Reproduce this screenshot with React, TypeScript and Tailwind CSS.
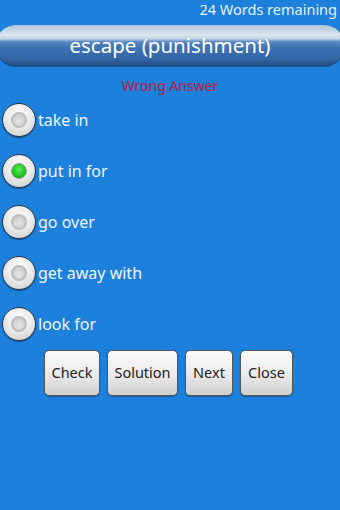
const options = ["take in", "put in for", "go over", "get away with", "look for"];
const buttons = [
  { label: "Check", w: "w-[56px]" },
  { label: "Solution", w: "w-[71px]" },
  { label: "Next", w: "w-[48px]" },
  { label: "Close", w: "w-[53px]" },
];

const Radio = ({ checked }: { checked: boolean }) => (
  <div className="w-[34px] h-[34px] rounded-full border border-[#2a3a4a] bg-[radial-gradient(circle_at_50%_35%,#ffffff_0%,#ececec_45%,#c9c9c9_100%)] flex items-center justify-center shadow-[0_1px_1px_rgba(0,0,0,0.4)]">
    {checked ? (
      <div className="w-[16px] h-[16px] rounded-full bg-[radial-gradient(circle_at_50%_40%,#5cf05c_0%,#1cc41c_60%,#0f8f0f_100%)] border border-[#9a9a9a]" />
    ) : (
      <div className="w-[16px] h-[16px] rounded-full border-2 border-[#bdbdbd] bg-[radial-gradient(circle_at_50%_60%,#e6e6e6_0%,#c4c4c4_100%)]" />
    )}
  </div>
);

export default function App() {
  return (
    <div className="w-[340px] h-[510px] bg-[#1c80dc] font-['Noto_Sans',sans-serif] overflow-hidden flex flex-col">
      <div className="text-right text-[14.5px] leading-[18px] text-[#e6f0fa] pr-[3px]">24 Words remaining</div>

      {/* title bar */}
      <div className="mt-[7px] h-[42px] -mx-[4px] rounded-[20px] border-b-2 border-[#1b4e86] bg-[linear-gradient(to_bottom,#aec3d8_0%,#dbe5ee_25%,#c4d4e4_34%,#5b89c2_42%,#3f73b3_55%,#3466a6_85%,#264f86_100%)] flex items-center justify-center">
        <span className="text-white text-[20.5px] leading-none pt-[1px]">escape (punishment)</span>
      </div>

      <div className="mt-[10px] text-center text-[14px] leading-[18px] text-[#b8213c]">Wrong Answer</div>

      <div className="mt-[8px] flex flex-col gap-[17px] pl-[2px]">
        {options.map((o, i) => (
          <div key={o} className="flex items-center gap-[2px]">
            <Radio checked={i === 1} />
            <span className="text-[16px] text-[#eef5fc] pb-[1px]">{o}</span>
          </div>
        ))}
      </div>

      <div className="mt-[9px] flex justify-center gap-[7px] pr-[3px]">
        {buttons.map((b) => (
          <div
            key={b.label}
            className={`${b.w} h-[46px] rounded-[5px] border border-[#555] bg-[linear-gradient(to_bottom,#fafafa_0%,#ececec_50%,#cfcfcf_100%)] flex items-center justify-center text-[14.5px] text-[#222] shadow-[0_1px_1px_rgba(0,0,0,0.3)]`}
          >
            {b.label}
          </div>
        ))}
      </div>
    </div>
  );
}
